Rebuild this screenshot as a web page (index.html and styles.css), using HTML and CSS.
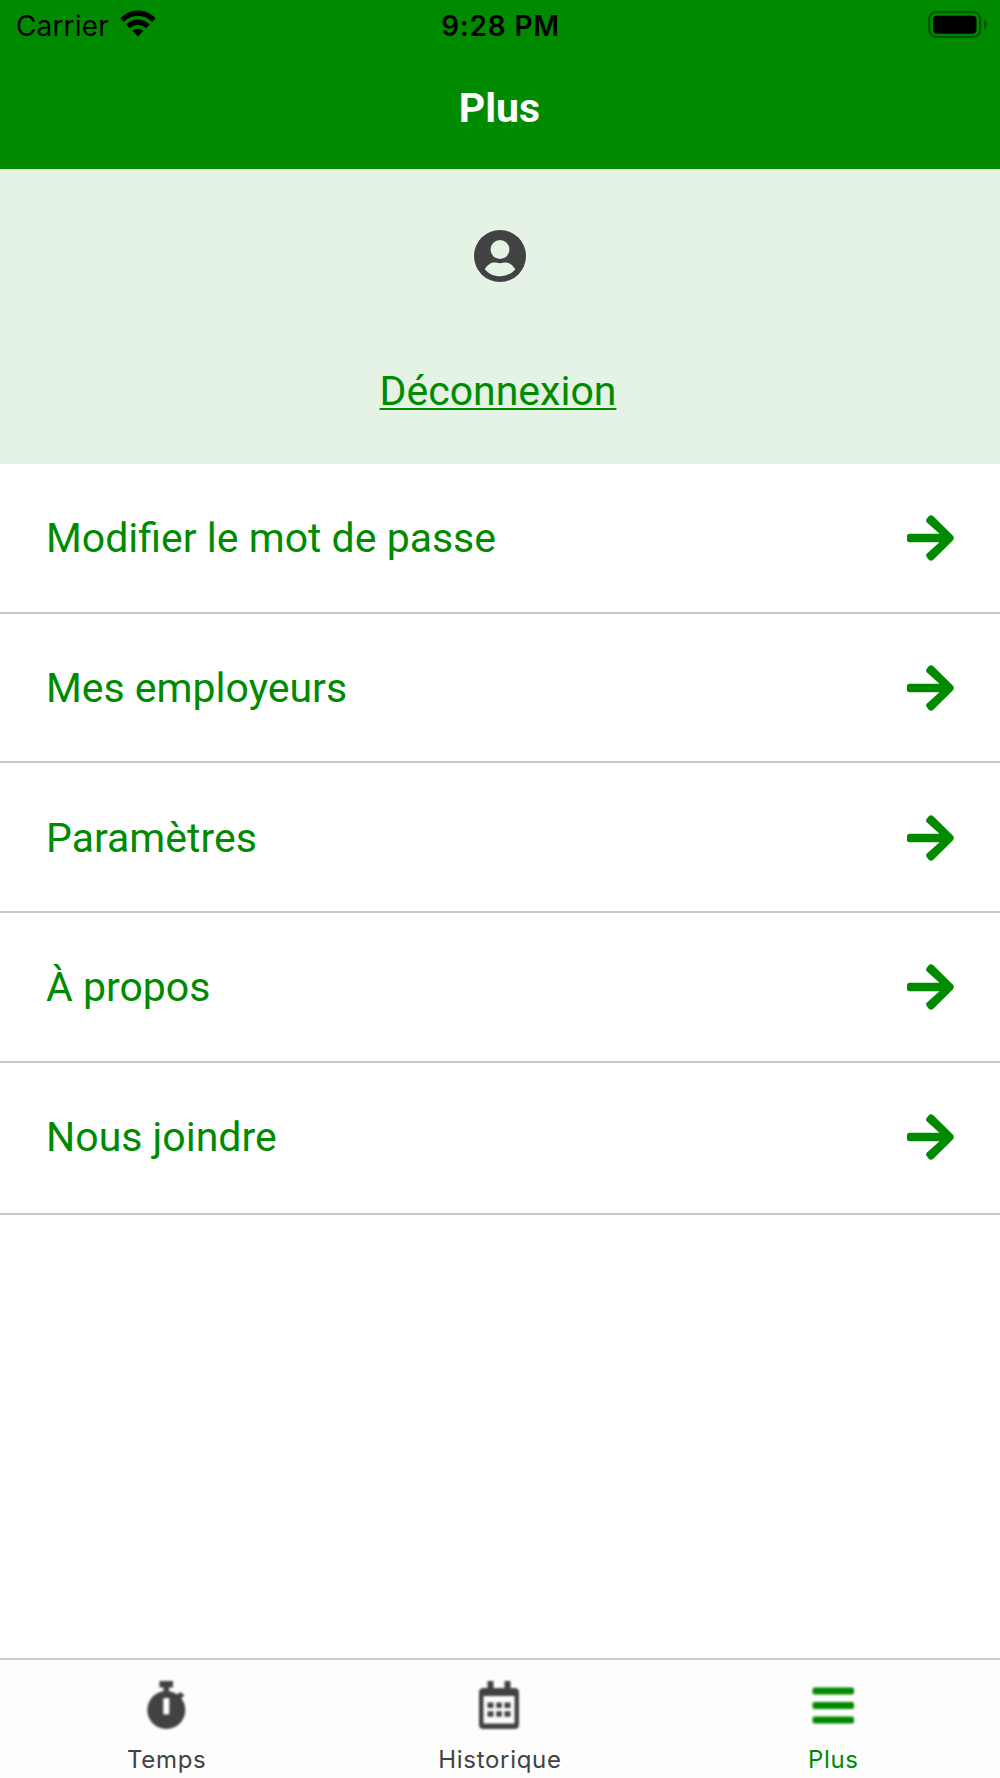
FILE: index.html
```html
<!DOCTYPE html>
<html lang="fr">
  <head>
    <meta charset="UTF-8" />
    <meta name="viewport" content="width=device-width, initial-scale=1.0" />
    <link rel="stylesheet" href="styles.css">
    <title>Plus</title>
  </head>
  <body>
    <header>
      <div class="status-bar">
        <div class="carrier">
          <span>Carrier</span>
          <svg class="wifi" viewBox="0 0 36 27">
            <path d="M.3 8.300C10.300-2.200 25.700-2.200 35.700 8.300L32.200 11.900C24.200 3.700 11.800 3.700 3.800 11.900Z" />
            <path d="M6.200 14.500C13 7.900 23 7.900 29.800 14.500L26.100 18.200C21.200 13.900 14.800 13.900 9.900 18.200Z" />
            <path d="M12.500 20.800C15.800 18.100 20.200 18.100 23.500 20.800L18 26.600Z" />
          </svg>
        </div>
        <span class="time">9:28 PM</span>
        <svg class="battery" viewBox="0 0 60 28">
          <rect class="case" x="1.200" y="1.200" width="51" height="24.600" rx="7" />
          <rect x="5" y="4.700" width="43.500" height="18" rx="4" />
          <path class="tip" d="M56 8.500c4 2 4 8 0 10z" />
        </svg>
      </div>
      <h1>Plus</h1>
    </header>
    <main>
      <section class="profile">
        <svg class="avatar" viewBox="0 0 52 52">
          <circle cx="26" cy="26" r="26" />
          <circle class="cutout" cx="26" cy="19.500" r="9.400" />
          <path class="cutout" d="M10.800 39.200C14 34.500 17 32.600 20.500 32.600C23 32.600 23.500 33.200 26 33.200S29 32.600 31.500 32.600C35 32.600 38.500 34.500 41.300 39.200C37.500 43.700 32 46.200 26 46.200S14.500 43.700 10.800 39.200Z" />
        </svg>
        <a class="logout" href="#">Déconnexion</a>
      </section>
      <nav class="menu">
        <a class="menu-item" href="#">
          <span>Modifier le mot de passe</span>
          <svg class="arrow" viewBox="0 0 47 46"><use href="#arrow" /></svg>
        </a>
        <a class="menu-item" href="#">
          <span>Mes employeurs</span>
          <svg class="arrow" viewBox="0 0 47 46"><use href="#arrow" /></svg>
        </a>
        <a class="menu-item" href="#">
          <span>Paramètres</span>
          <svg class="arrow" viewBox="0 0 47 46"><use href="#arrow" /></svg>
        </a>
        <a class="menu-item" href="#">
          <span>À propos</span>
          <svg class="arrow" viewBox="0 0 47 46"><use href="#arrow" /></svg>
        </a>
        <a class="menu-item" href="#">
          <span>Nous joindre</span>
          <svg class="arrow" viewBox="0 0 47 46"><use href="#arrow" /></svg>
        </a>
      </nav>
    </main>
    <footer class="tabs">
      <a class="tab" href="#">
        <svg class="tab-icon" viewBox="0 0 48 50">
          <path d="M17.500 1H31v6.500h-4v4h-5.500v-4h-4z" />
          <path d="M34 15l4.500-3 4 3.500L38 19z" />
          <circle cx="24.300" cy="30" r="19" />
          <rect class="hand" x="21.300" y="18" width="6" height="16.500" rx="1" />
        </svg>
        <span>Temps</span>
      </a>
      <a class="tab" href="#">
        <svg class="tab-icon" viewBox="0 0 48 50">
          <path fill-rule="evenodd" d="M8.500 8H12.500V1H18.500V8H29.500V1H35.500V8H39.500Q44 8 44 12.500V44.500Q44 49 39.500 49H8.500Q4 49 4 44.500V12.500Q4 8 8.500 8ZM8.500 16V43.500H39.500V16Z" />
          <path d="M12.500 22.500h6v5.500h-6zM21.300 22.500h5.500v5.500h-5.500zM29.500 22.500h6v5.500h-6zM12.500 31.200h6v5.500h-6zM21.300 31.200h5.500v5.500h-5.500zM29.500 31.200h6v5.500h-6z" />
        </svg>
        <span>Historique</span>
      </a>
      <a class="tab active" href="#">
        <svg class="tab-icon" viewBox="0 0 48 50">
          <rect x="3.500" y="7.500" width="41.500" height="7" rx="2" />
          <rect x="3.500" y="22" width="41.500" height="7" rx="2" />
          <rect x="3.500" y="36.500" width="41.500" height="7" rx="2" />
        </svg>
        <span>Plus</span>
      </a>
    </footer>
    <svg class="symbols">
      <symbol id="arrow" viewBox="0 0 47 46">
        <path d="M2.500 18.700H32.500L19.700 7.300Q18.300 5.500 20 3.500L21.800 1.300Q24 -.6 26.300 1.300L46 20.800Q47.700 23 46 25.200L26.300 44.700Q24 46.600 21.800 44.700L20 42.500Q18.300 40.500 19.700 38.700L32.500 27.300H2.500Q0 27.300 0 24.800V21.200Q0 18.700 2.500 18.700Z" />
      </symbol>
    </svg>
  </body>
</html>
```
FILE: styles.css
```css
* {
  margin: 0;
  padding: 0;
  box-sizing: border-box;
}

body {
  font-family: Roboto, sans-serif;
  color: #008a00;
  background-color: #fff;
  height: 1778px;
  display: flex;
  flex-direction: column;
}

a {
  color: inherit;
  text-decoration: none;
}

svg {
  fill: currentColor;
  display: block;
}

/* HEADER */
header {
  height: 169px;
  background-color: #008a00;
}

.status-bar {
  height: 53px;
  padding: 0 12px 0 16px;
  display: grid;
  grid-template-columns: 1fr auto 1fr;
  color: #000;
  font-family: Inter, sans-serif;
  font-size: 28px;
  line-height: 52px;
}

.carrier {
  display: flex;
  letter-spacing: 0.15px;
}

.wifi {
  width: 36px;
  height: 27px;
  margin: 10px 0 0 11px;
}

.time {
  margin-right: 3px;
  font-weight: 600;
  letter-spacing: 0.8px;
}

.battery {
  width: 60px;
  height: 28px;
  margin-top: 11px;
  justify-self: end;
}

.case {
  fill: none;
  stroke: #005800;
  stroke-width: 2.2px;
}

.tip {
  fill: #005800;
}

h1 {
  color: #fff;
  font-size: 41px;
  line-height: 48px;
  padding: 31px 1px 0 0;
  text-align: center;
}

/* PROFILE */
.profile {
  height: 295px;
  padding: 61px 1px 0 0;
  background-color: #e4f3e4;
  display: flex;
  flex-direction: column;
  align-items: center;
}

.avatar {
  width: 52px;
  height: 52px;
  color: #424242;
}

.cutout {
  fill: #e4f3e4;
}

.logout {
  margin: 85px 3px 0 0;
  font-size: 41px;
  line-height: 48px;
  text-decoration: underline;
  text-decoration-thickness: 2px;
  text-underline-offset: 3px;
  text-decoration-skip-ink: none;
}

/* MENU */
.menu-item {
  height: 149.7px;
  padding: 1px 46px 0;
  border-bottom: 2px solid #c8c8c8;
  display: flex;
  align-items: center;
  justify-content: space-between;
  font-size: 41px;
}

.menu-item:last-child {
  height: 152px;
  padding-bottom: 2px;
}

.arrow {
  width: 47px;
  height: 46px;
}

/* TABS */
.tabs {
  height: 120px;
  margin-top: auto;
  border-top: 2px solid #ccc;
  background-color: #fdfdfd;
  color: #424242;
  display: grid;
  grid-template-columns: repeat(3, 1fr);
}

.tab {
  display: flex;
  flex-direction: column;
  align-items: center;
  font-family: Inter, sans-serif;
  font-size: 24px;
  letter-spacing: 0.7px;
  line-height: 28px;
}

.active {
  color: #008a00;
}

.tab-icon {
  width: 48px;
  height: 50px;
  margin: 20px 1px 16px 0;
  filter: blur(0.8px);
}

.hand {
  fill: #fdfdfd;
}

.symbols {
  display: none;
}
```
